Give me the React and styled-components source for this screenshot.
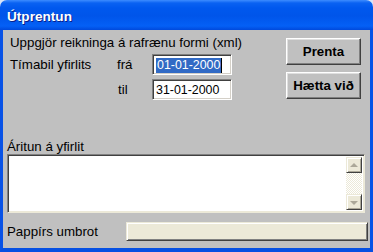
import React from "react";
import styled, { createGlobalStyle } from "styled-components";

const Global = createGlobalStyle`
  html, body { margin: 0; padding: 0; background: #d8e4f8; }
  body { font-family: "Liberation Sans", Arial, sans-serif; }
`;

const Window = styled.div`
  width: 373px;
  height: 252px;
  display: flex;
  flex-direction: column;
  overflow: hidden;
  border-radius: 7px 7px 0 0;
`;

const TitleBar = styled.div`
  height: 30px;
  flex: none;
  box-sizing: border-box;
  padding: 2px 0 0 7px;
  display: flex;
  align-items: center;
  background: linear-gradient(
    to bottom,
    #3d8cff 0px,
    #0a62f2 3px,
    #0058ee 8px,
    #0055ea 16px,
    #0460f6 26px,
    #0049dc 30px
  );
  color: #fff;
  font: bold 13.6px/15px "Liberation Sans", Arial, sans-serif;
  text-shadow: 1px 1px 0 #0a1f8a;
`;

const Frame = styled.div`
  flex: 1;
  display: flex;
  border-left: 3px solid #0852e6;
  border-right: 3px solid #0852e6;
  border-bottom: 4px solid #0650e2;
`;

const Body = styled.div`
  flex: 1;
  background: #c0c0c0;
  display: flex;
  flex-direction: column;
  padding: 5px 0 7px 4px;
  font: 13.3px/15px "Liberation Sans", Arial, sans-serif;
  color: #000;
`;

const Top = styled.div`
  display: flex;
  justify-content: space-between;
  padding-left: 3px;
`;

const LeftCol = styled.div`
  display: flex;
  flex-direction: column;
  gap: 4px;
`;

const Header = styled.div``;

const Row = styled.div`
  display: flex;
  align-items: center;
`;

const Label = styled.div`
  width: ${(p) => p.$w}px;
  padding-left: ${(p) => p.$pl || 0}px;
  box-sizing: border-box;
`;

const Sunken = styled.div`
  box-sizing: border-box;
  border: 1px solid;
  border-color: #808080 #ffffff #ffffff #808080;
  box-shadow: inset 1px 1px 0 #404040, inset -1px -1px 0 #d4d0c8;
  background: #fff;
`;

const Field = styled(Sunken)`
  width: 80px;
  height: 21px;
  padding: 2px 0 0 3px;
  display: flex;
  align-items: center;
  font-size: 12.4px;
`;

const Selected = styled.span`
  background: #316ac5;
  color: #fff;
  padding: 0 1px;
`;

const Caret = styled.span`
  display: inline-block;
  width: 1px;
  height: 15px;
  background: #000;
`;

const Buttons = styled.div`
  display: flex;
  flex-direction: column;
  gap: 7px;
  width: 75px;
  margin: 3px 9px 0 0;
`;

const Button = styled.button`
  height: 27px;
  box-sizing: border-box;
  background: #c0c0c0;
  border: 1px solid;
  border-color: #ffffff #404040 #404040 #ffffff;
  box-shadow: inset -1px -1px 0 #808080, inset 1px 1px 0 #dfdfdf;
  font: bold 13.3px/15px "Liberation Sans", Arial, sans-serif;
  color: #000;
  padding: 0;
`;

const Caption = styled.div`
  margin-top: 39px;
`;

const Memo = styled(Sunken)`
  width: 358px;
  height: 59px;
  display: flex;
  justify-content: flex-end;
  padding: 2px;
  border-color: #808080 #ece9d8 #ece9d8 #808080;
  box-shadow: inset 1px 1px 0 #404040, inset -1px -1px 0 #ece9d8;
`;

const Scrollbar = styled.div`
  width: 16px;
  display: flex;
  flex-direction: column;
  justify-content: space-between;
  background-color: #f4f3ee;
  background-image: repeating-conic-gradient(#ece9d8 0 25%, #ffffff 0 50%);
  background-size: 2px 2px;
`;

const ScrollBtn = styled.div`
  width: 16px;
  height: 16px;
  box-sizing: border-box;
  background: #ece9d8;
  border: 1px solid;
  border-color: #ece9d8 #404040 #404040 #ece9d8;
  box-shadow: inset 1px 1px 0 #fff, inset -1px -1px 0 #aca899;
  display: flex;
  align-items: center;
  justify-content: center;
`;

const Arrow = styled.div`
  width: 0;
  height: 0;
  border-left: 4px solid transparent;
  border-right: 4px solid transparent;
  ${(p) =>
    p.$down
      ? "border-top: 4px solid #aca899; margin-top: 1px;"
      : "border-bottom: 4px solid #aca899; margin-top: -1px;"}
`;

const Bottom = styled.div`
  display: flex;
  align-items: center;
  margin-top: 9px;
`;

const Bar = styled.div`
  width: 242px;
  height: 19px;
  margin-left: auto;
  margin-right: 2px;
  box-sizing: border-box;
  background: #ece9d8;
  border: 1px solid;
  border-color: #ece9d8 #404040 #404040 #ece9d8;
  box-shadow: inset 1px 1px 0 #fff, inset -1px -1px 0 #808080;
`;

export default function App() {
  return (
    <>
      <Global />
      <Window>
        <TitleBar>Útprentun</TitleBar>
        <Frame>
          <Body>
            <Top>
              <LeftCol>
                <Header>Uppgjör reikninga á rafrænu formi (xml)</Header>
                <Row>
                  <Label $w={107}>Tímabil yfirlits</Label>
                  <Label $w={35}>frá</Label>
                  <Field>
                    <Selected>01-01-2000</Selected>
                    <Caret />
                  </Field>
                </Row>
                <Row>
                  <Label $w={107} />
                  <Label $w={35} $pl={1}>til</Label>
                  <Field>31-01-2000</Field>
                </Row>
              </LeftCol>
              <Buttons>
                <Button>Prenta</Button>
                <Button>Hætta við</Button>
              </Buttons>
            </Top>
            <Caption>Áritun á yfirlit</Caption>
            <Memo>
              <Scrollbar>
                <ScrollBtn>
                  <Arrow />
                </ScrollBtn>
                <ScrollBtn>
                  <Arrow $down />
                </ScrollBtn>
              </Scrollbar>
            </Memo>
            <Bottom>
              <span>Pappírs umbrot</span>
              <Bar />
            </Bottom>
          </Body>
        </Frame>
      </Window>
    </>
  );
}
